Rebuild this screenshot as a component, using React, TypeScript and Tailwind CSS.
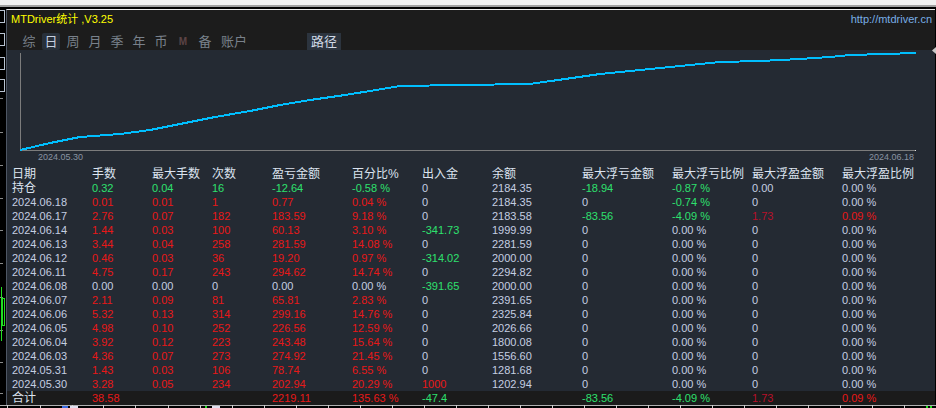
const tone: Record<string, string> = {
  r: 'text-[#e81818]',
  g: 'text-[#2ee06e]',
  n: 'text-[#c4cee2]',
  d: 'text-[#b8102a]',
};

const header = ['日期', '手数', '最大手数', '次数', '盈亏金额', '百分比%', '出入金', '余额', '最大浮亏金额', '最大浮亏比例', '最大浮盈金额', '最大浮盈比例'];

const z = ['n0', 'n0.00 %', 'n0', 'n0.00 %'];

const rows: string[][] = [
  ['持仓', 'g0.32', 'g0.04', 'g16', 'g-12.64', 'g-0.58 %', 'n0', 'n2184.35', 'g-18.94', 'g-0.87 %', 'n0.00', 'n0.00 %'],
  ['2024.06.18', 'r0.01', 'r0.01', 'r1', 'r0.77', 'r0.04 %', 'n0', 'n2184.35', 'n0', 'g-0.74 %', 'n0', 'n0.00 %'],
  ['2024.06.17', 'r2.76', 'r0.07', 'r182', 'r183.59', 'r9.18 %', 'n0', 'n2183.58', 'g-83.56', 'g-4.09 %', 'd1.73', 'r0.09 %'],
  ['2024.06.14', 'r1.44', 'r0.03', 'r100', 'r60.13', 'r3.10 %', 'g-341.73', 'n1999.99', ...z],
  ['2024.06.13', 'r3.44', 'r0.04', 'r258', 'r281.59', 'r14.08 %', 'n0', 'n2281.59', ...z],
  ['2024.06.12', 'r0.46', 'r0.03', 'r36', 'r19.20', 'r0.97 %', 'g-314.02', 'n2000.00', ...z],
  ['2024.06.11', 'r4.75', 'r0.17', 'r243', 'r294.62', 'r14.74 %', 'n0', 'n2294.82', ...z],
  ['2024.06.08', 'n0.00', 'n0.00', 'n0', 'n0.00', 'n0.00 %', 'g-391.65', 'n2000.00', ...z],
  ['2024.06.07', 'r2.11', 'r0.09', 'r81', 'r65.81', 'r2.83 %', 'n0', 'n2391.65', ...z],
  ['2024.06.06', 'r5.32', 'r0.13', 'r314', 'r299.16', 'r14.76 %', 'n0', 'n2325.84', ...z],
  ['2024.06.05', 'r4.98', 'r0.10', 'r252', 'r226.56', 'r12.59 %', 'n0', 'n2026.66', ...z],
  ['2024.06.04', 'r3.92', 'r0.12', 'r223', 'r243.48', 'r15.64 %', 'n0', 'n1800.08', ...z],
  ['2024.06.03', 'r4.36', 'r0.07', 'r273', 'r274.92', 'r21.45 %', 'n0', 'n1556.60', ...z],
  ['2024.05.31', 'r1.43', 'r0.03', 'r106', 'r78.74', 'r6.55 %', 'n0', 'n1281.68', ...z],
  ['2024.05.30', 'r3.28', 'r0.05', 'r234', 'r202.94', 'r20.29 %', 'r1000', 'n1202.94', ...z],
];

const total = ['合计', 'r38.58', 'n', 'n', 'r2219.11', 'r135.63 %', 'g-47.4', 'n', 'g-83.56', 'g-4.09 %', 'd1.73', 'r0.09 %'];

// equity curve, page coords
const curve = [
  [20, 150], [50, 143], [80, 137], [120, 134], [150, 130], [180, 124], [215, 117], [250, 111],
  [280, 105], [310, 100], [345, 95], [370, 91], [400, 86], [460, 85], [530, 84], [565, 79],
  [600, 74], [640, 70], [680, 66], [720, 62], [760, 61], [800, 59], [830, 57], [850, 55],
  [885, 54], [916, 53],
];

const tabs = ['综', '日', '周', '月', '季', '年', '币', 'M', '备', '账户'];

const cols = 'grid grid-cols-[80px_60px_60px_60px_80px_70px_70px_90px_90px_80px_90px_1fr] pl-[5px] h-[14px] items-center';

function Cell({ v }: { v: string }) {
  const t = v[0];
  return <div className={`${tone[t]} text-[11px] leading-[14px] whitespace-nowrap`}>{v.slice(1)}</div>;
}

function EdgeStrip() {
  const ticks = [98, 132, 165, 198, 230, 263, 297, 330, 362, 393];
  return (
    <svg width="6" height="396" className="block bg-black">
      {[1, 24, 48, 70].map((y) => (
        <rect key={y} x="-3" y={y + 0.5} width="7.5" height="12" fill="none" stroke="#b8c2d0" strokeWidth="1" />
      ))}
      {ticks.map((y) => (
        <line key={y} x1="0" x2="3" y1={y - 9 + 0.5} y2={y - 9 + 0.5} stroke="#8a8a8a" />
      ))}
      <line x1="1.5" x2="1.5" y1="278" y2="332" stroke="#22e022" />
      <rect x="2.5" y="289.5" width="2" height="27" fill="none" stroke="#22e022" />
    </svg>
  );
}

export default function App() {
  const pts = curve.map(([x, y]) => `${x - 7},${y - 50}`).join(' ');

  return (
    <div className="w-[936px] h-[408px] overflow-hidden bg-black" style={{ fontFamily: "'Liberation Sans', 'Noto Sans CJK SC', sans-serif" }}>
      <div className="h-[5px] bg-[#f0f0f0]" />
      <div className="h-[2px] bg-[#a0a0a0]" />
      <div className="h-[2px] bg-black" />

      <div className="relative flex h-[396px]">
        <EdgeStrip />

        <div className="flex-1 flex flex-col border-l border-t border-l-[#4e5664] border-t-[#e8e8e8]">
          {/* title + tabs */}
          <div className="h-[40px] bg-[#1c1c1c] flex flex-col">
            <div className="h-[18px] flex items-center justify-between pl-[4px] pr-[3px]">
              <span className="text-[11px] text-[#ffff00]">MTDriver统计 ,V3.25</span>
              <span className="text-[11px] text-[#78aee6]">http://mtdriver.cn</span>
            </div>
            <div className="mt-[5px] h-[17px] flex items-center pl-[13px] gap-[4px]">
              {tabs.map((t) => (
                <div
                  key={t}
                  className={`h-[17px] flex items-center justify-center rounded-[2px] ${t === '账户' ? 'w-[32px]' : 'w-[18px]'} ${t === '日' ? 'bg-[#28303a] text-[#c6d0e0]' : 'text-[#79818b]'}`}
                >
                  {t === 'M' ? (
                    <span className="text-[10px] font-bold text-[#5c4446]">M</span>
                  ) : (
                    <span className="text-[13px] leading-[17px]">{t}</span>
                  )}
                </div>
              ))}
              <div className="ml-[53px] h-[17px] w-[34px] flex items-center justify-center bg-[#2c343e] text-[#d0dae6] text-[13px]">
                路径
              </div>
            </div>
          </div>

          {/* chart + table */}
          <div className="flex-1 bg-[#242a33] flex flex-col">
            <svg width="928" height="101" className="block">
              <line x1="13.5" x2="13.5" y1="3" y2="100" stroke="#7c7c7c" />
              <line x1="13" x2="909" y1="100.5" y2="100.5" stroke="#7c7c7c" />
              <rect x="908" y="100" width="1" height="1" fill="#e0e0e0" />
              <polyline points={pts} fill="none" stroke="#00bfff" strokeWidth="2" shapeRendering="crispEdges" />
            </svg>
            <div className="h-[16px] flex justify-between pl-[31px] pr-[21px] text-[9px] leading-[13px] text-[#8a94a2]">
              <span>2024.05.30</span>
              <span>2024.06.18</span>
            </div>

            <div className={cols}>
              {header.map((h) => (
                <div key={h} className="text-[12px] leading-[14px] text-[#dce3ef] whitespace-nowrap">{h}</div>
              ))}
            </div>

            {rows.map((r) => (
              <div key={r[0]} className={cols}>
                {r[0] === '持仓' ? (
                  <div className="text-[12px] leading-[14px] text-[#dce3ef]">{r[0]}</div>
                ) : (
                  <div className="text-[11px] leading-[14px] text-[#c4cee2]">{r[0]}</div>
                )}
                {r.slice(1).map((v, i) => (
                  <Cell key={i} v={v} />
                ))}
              </div>
            ))}
          </div>

          <div className={`${cols} bg-[#1b1b1b]`}>
            <div className="text-[12px] leading-[14px] text-[#dce3ef]">{total[0]}</div>
            {total.slice(1).map((v, i) => (
              <Cell key={i} v={v} />
            ))}
          </div>
        </div>

        <div className="w-[1px] bg-black" />

        {/* chart shift marker */}
        <svg width="4" height="7" className="absolute right-0 top-[38px]">
          <polygon points="4,0 0,3.5 4,7" fill="#c8c8c8" />
        </svg>
      </div>

      {/* chart bottom edge */}
      <svg width="936" height="3" className="block">
        <line x1="0" x2="936" y1="0.5" y2="0.5" stroke="#b0b0b0" />
        {[7, 40, 72, 103, 135, 168, 200, 232, 264, 296, 328, 360, 392, 424, 456, 488, 520, 552, 584, 616, 648, 680, 712, 744, 776, 808, 840, 872, 904].map((x) => (
          <line key={x} x1={x + 0.5} x2={x + 0.5} y1="0" y2="3" stroke="#d0d0d0" />
        ))}
        <rect x="62" y="1" width="6" height="2" fill="#3a6ae0" />
        <rect x="70" y="1" width="8" height="2" fill="#e0e0f0" />
        <rect x="205" y="1" width="2" height="2" fill="#22e022" />
        <rect x="212" y="1" width="8" height="2" fill="#e0e0f0" />
        <rect x="926" y="1" width="2" height="2" fill="#22e022" />
        <rect x="930" y="1" width="2" height="2" fill="#22e022" />
      </svg>
    </div>
  );
}
